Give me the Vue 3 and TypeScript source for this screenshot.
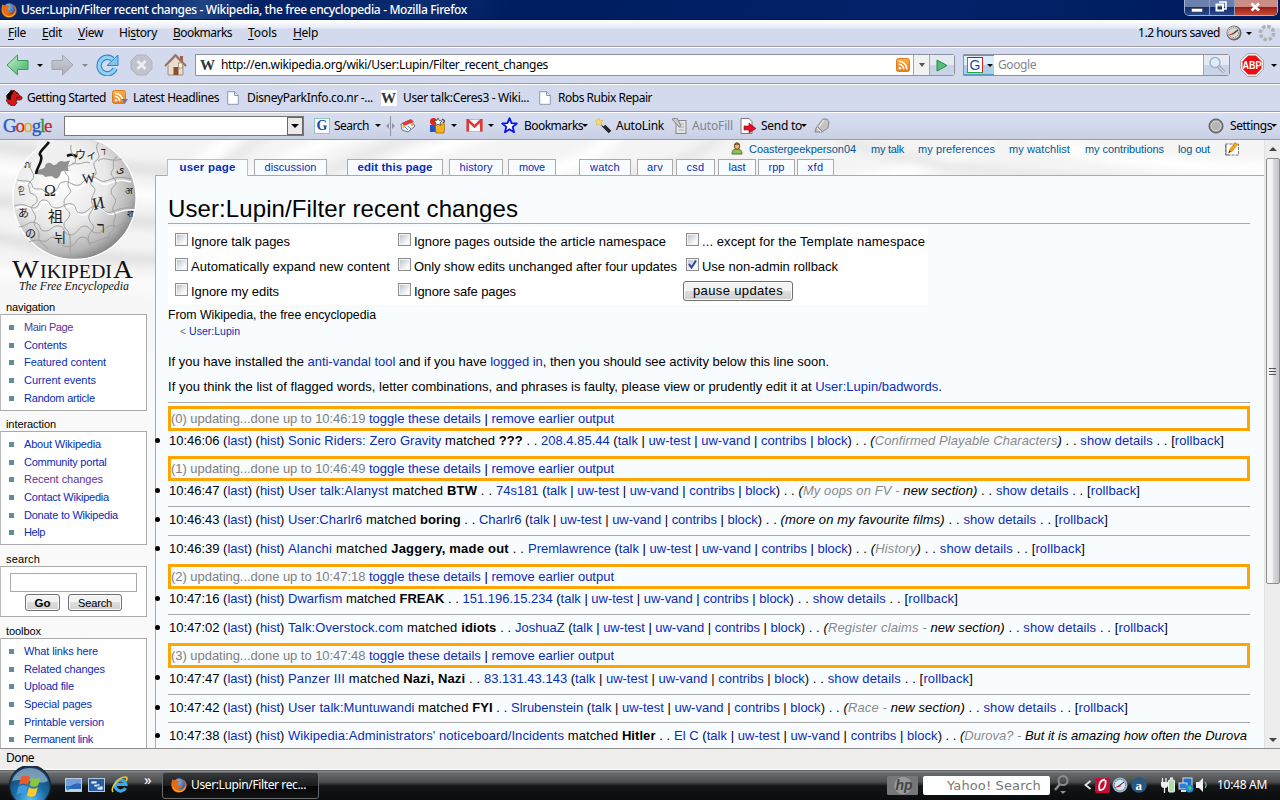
<script setup lang="ts">
import type { Directive } from 'vue'

// Spreads or tightens the letters of a label so that it fills the given width.
const vFit: Directive<HTMLElement, number> = {
  mounted(el, binding) {
    const count = (el.textContent ?? '').length
    if (!count) return
    const natural = el.getBoundingClientRect().width
    el.style.letterSpacing = `${(binding.value - natural) / count}px`
  },
}

interface Label { text: string; w: number; visited?: boolean; bold?: boolean; active?: boolean }

const menus = [
  { key: 'F', rest: 'ile', pre: '', w: 18 },
  { key: 'E', rest: 'dit', pre: '', w: 20 },
  { key: 'V', rest: 'iew', pre: '', w: 25 },
  { key: 's', rest: 'tory', pre: 'Hi', w: 38 },
  { key: 'B', rest: 'ookmarks', pre: '', w: 59 },
  { key: 'T', rest: 'ools', pre: '', w: 29 },
  { key: 'H', rest: 'elp', pre: '', w: 25 },
]

const personal: Label[] = [
  { text: 'Coastergeekperson04', w: 107 },
  { text: 'my talk', w: 33 },
  { text: 'my preferences', w: 77 },
  { text: 'my watchlist', w: 61 },
  { text: 'my contributions', w: 79 },
  { text: 'log out', w: 32 },
]

const tabs: Label[] = [
  { text: 'user page', w: 56, bold: true, active: true },
  { text: 'discussion', w: 52 },
  { text: 'edit this page', w: 75, bold: true },
  { text: 'history', w: 33 },
  { text: 'move', w: 26 },
  { text: 'watch', w: 30 },
  { text: 'arv', w: 16 },
  { text: 'csd', w: 18 },
  { text: 'last', w: 17 },
  { text: 'rpp', w: 16 },
  { text: 'xfd', w: 16 },
]

const navigation: Label[] = [
  { text: 'Main Page', w: 49, visited: true },
  { text: 'Contents', w: 43 },
  { text: 'Featured content', w: 82 },
  { text: 'Current events', w: 72 },
  { text: 'Random article', w: 71 },
]
const interaction: Label[] = [
  { text: 'About Wikipedia', w: 77 },
  { text: 'Community portal', w: 82.5 },
  { text: 'Recent changes', w: 79, visited: true },
  { text: 'Contact Wikipedia', w: 85 },
  { text: 'Donate to Wikipedia', w: 94 },
  { text: 'Help', w: 21 },
]
const toolbox: Label[] = [
  { text: 'What links here', w: 74 },
  { text: 'Related changes', w: 81 },
  { text: 'Upload file', w: 50 },
  { text: 'Special pages', w: 68 },
  { text: 'Printable version', w: 80 },
  { text: 'Permanent link', w: 69 },
]

const options = [
  { text: 'Ignore talk pages', w: 99, on: false },
  { text: 'Ignore pages outside the article namespace', w: 252, on: false },
  { text: '... except for the Template namespace', w: 223, on: false },
  { text: 'Automatically expand new content', w: 199, on: false },
  { text: 'Only show edits unchanged after four updates', w: 263, on: false },
  { text: 'Use non-admin rollback', w: 136, on: true },
  { text: 'Ignore my edits', w: 88, on: false },
  { text: 'Ignore safe pages', w: 102, on: false },
]

interface Edit {
  kind: 'edit'; time: string; title: string; match: string; user: string
  grey?: string; note?: string; open?: boolean; x: [number, number, number]; tight?: boolean; loose?: boolean
}
interface Box { kind: 'box'; n: number; until: string }
interface Rule { kind: 'rule' }

// x holds the right edges of the title, user and comment segments.
const feed: (Edit | Box | Rule)[] = [
  { kind: 'rule' },
  { kind: 'box', n: 0, until: '10:46:19' },
  { kind: 'edit', time: '10:46:06', title: 'Sonic Riders: Zero Gravity', match: '???', user: '208.4.85.44', grey: 'Confirmed Playable Characters', x: [541, 852, 1224] },
  { kind: 'box', n: 1, until: '10:46:49' },
  { kind: 'edit', time: '10:46:47', title: 'User talk:Alanyst', match: 'BTW', user: '74s181', grey: 'My oops on FV - ', note: 'new section', x: [496, 780, 1140] },
  { kind: 'rule' },
  { kind: 'edit', time: '10:46:43', title: 'User:Charlr6', match: 'boring', user: 'Charlr6', note: 'more on my favourite films', x: [479, 762, 1108] },
  { kind: 'rule' },
  { kind: 'edit', time: '10:46:39', title: 'Alanchi', match: 'Jaggery, made out', user: 'Premlawrence', grey: 'History', x: [528, 852, 1085] },
  { kind: 'box', n: 2, until: '10:47:18' },
  { kind: 'edit', time: '10:47:16', title: 'Dwarfism', match: 'FREAK', user: '151.196.15.234', x: [462.5, 794, 958] },
  { kind: 'rule' },
  { kind: 'edit', time: '10:47:02', title: 'Talk:Overstock.com', match: 'idiots', user: 'JoshuaZ', grey: 'Register claims - ', note: 'new section', x: [515, 805, 1168] },
  { kind: 'box', n: 3, until: '10:47:48' },
  { kind: 'edit', time: '10:47:47', title: 'Panzer III', match: 'Nazi, Nazi', user: '83.131.43.143', x: [484, 809, 973], loose: true },
  { kind: 'rule' },
  { kind: 'edit', time: '10:47:42', title: 'User talk:Muntuwandi', match: 'FYI', user: 'Slrubenstein', grey: 'Race - ', note: 'new section', x: [511, 825, 1128], tight: true },
  { kind: 'rule' },
  { kind: 'edit', time: '10:47:38', title: "Wikipedia:Administrators' noticeboard/Incidents", match: 'Hitler', user: 'El C', grey: 'Durova? - ', note: 'But it is amazing how often the Durova', open: true, x: [674, 942, 1247] },
]
</script>

<template>
  <div class="screen">
    <svg class="defs" width="0" height="0">
      <defs>
        <linearGradient id="green" x1="0" y1="0" x2="1" y2="1"><stop offset="0" stop-color="#c9f3cf" /><stop offset="1" stop-color="#3fae5e" /></linearGradient>
        <linearGradient id="grey" x1="0" y1="0" x2="0" y2="1"><stop offset="0" stop-color="#cfd2da" /><stop offset="1" stop-color="#a9acb5" /></linearGradient>
        <linearGradient id="rss" x1="0" y1="0" x2="0" y2="1"><stop offset="0" stop-color="#fbb04c" /><stop offset="1" stop-color="#ee7d16" /></linearGradient>
        <radialGradient id="globe" cx=".38" cy=".35" r=".7"><stop offset="0" stop-color="#fff" /><stop offset=".55" stop-color="#e8e8e8" /><stop offset=".85" stop-color="#b5b5b5" /><stop offset="1" stop-color="#7c7c7c" /></radialGradient>
        <radialGradient id="orb" cx=".5" cy=".85" r=".9"><stop offset="0" stop-color="#57c6f2" /><stop offset=".45" stop-color="#1c6ca5" /><stop offset="1" stop-color="#0d3057" /></radialGradient>
        <radialGradient id="ball" cx=".35" cy=".3" r=".8"><stop offset="0" stop-color="#8fc6f5" /><stop offset="1" stop-color="#143e94" /></radialGradient>
        <filter id="soft"><feGaussianBlur stdDeviation="5" /></filter>
        <symbol id="fox" viewBox="0 0 16 16">
          <circle cx="8.3" cy="7.6" r="6.3" fill="url(#ball)" />
          <path d="M1.2 2.2 3.6 3.5C4.8 2.8 6.2 2.8 7 3.8L9 4.6 7.4 6 6.8 8c1 2 3.6 1.6 4.6.6-.4 3-3.4 3.4-5 2.6C8 13 12.400 12.600 13.600 9.200 14.400 6.400 13 3.600 12 2.400 15 4 16.400 7.400 15.200 10.700 13.800 14.200 10.600 15.900 7 15.500 3 15 .3 11.600.4 7.800.4 5.600.9 4.200 1.200 2.200Z" fill="#e66b10" />
          <path d="M1.600 4.600C1 9 3 13 7 14 11 14.800 14 12 14.700 8.500 15 13 11 15.400 7.500 15 3 14.500.5 10 1.600 4.600Z" fill="#fbc229" />
        </symbol>
        <symbol id="feed" viewBox="0 0 14 14">
          <rect x=".5" y=".5" width="13" height="13" rx="2" fill="url(#rss)" stroke="#dd7d20" />
          <circle cx="3.900" cy="10.200" r="1.300" fill="#fff" /><path d="M2.800 6.300c2.700 0 4.900 2.200 4.900 4.900M2.800 3.200c4.400 0 8 3.600 8 8" fill="none" stroke="#fff" stroke-width="1.600" />
        </symbol>
        <symbol id="page" viewBox="0 0 12 14"><path d="M.7.7h7l3.600 3.600v9H.7Z" fill="#fff" stroke="#8c98aa" /><path d="M7.500.7v3.800h3.800" fill="#e4e8ef" stroke="#8c98aa" /></symbol>
        <symbol id="dial" viewBox="0 0 16 16"><circle cx="8" cy="8" r="7.500" fill="#666" /><circle cx="7.500" cy="7.500" r="6.300" fill="#d8d8d0" /><circle cx="7.500" cy="7.500" r="5" fill="none" stroke="#666" stroke-dasharray="1 1.500" /><path d="m8 8 4-3" stroke="#333" stroke-width="1.200" /><path d="m1.500 10.800 6-3.300 1 1.500z" fill="#d11" /></symbol>
      </defs>
    </svg>

    <header class="titlebar">
      <svg class="fox" width="16" height="16"><use href="#fox" /></svg>
      <span v-fit="446" class="caption">User:Lupin/Filter recent changes - Wikipedia, the free encyclopedia - Mozilla Firefox</span>
      <div class="winbtns">
        <i class="wb"><svg width="24" height="15"><rect x="6.500" y="8.500" width="11" height="3.500" fill="#fff" stroke="#445" stroke-width=".6" /></svg></i>
        <i class="wb"><svg width="24" height="15"><path d="M9 2h7v7h-2" fill="none" stroke="#fff" stroke-width="1.600" /><rect x="6.500" y="4.500" width="6.500" height="6" fill="none" stroke="#fff" stroke-width="2" /></svg></i>
        <i class="wb close"><svg width="41" height="15"><path d="m16.500 3.500 7.500 7M24 3.500l-7.500 7" stroke="#fff" stroke-width="2.800" /></svg></i>
      </div>
    </header>

    <nav class="menubar seg">
      <div class="menus">
        <span v-for="m in menus" :key="m.rest" v-fit="m.w" class="t">{{ m.pre }}<u>{{ m.key }}</u>{{ m.rest }}</span>
      </div>
      <div class="saved">
        <span v-fit="82" class="t">1.2 hours saved</span>
        <svg width="16" height="16"><use href="#dial" /></svg>
        <i class="tri" />
        <svg width="18" height="18" class="throb"><circle cx="9" cy="9" r="6.600" fill="none" stroke="#b0b2b8" stroke-width="3.500" stroke-dasharray="3.500 1.680" /></svg>
      </div>
    </nav>

    <div class="navbar seg">
      <div class="navicons">
        <svg width="23" height="22"><path d="M1 11 11.500 1v5.500H22v9H11.500V21Z" fill="url(#green)" stroke="#3c9960" stroke-linejoin="round" /></svg>
        <i class="tri" />
        <svg width="23" height="22"><path d="M22 11 11.500 1v5.500H1v9h10.500V21Z" fill="url(#grey)" stroke="#a2a5ae" stroke-linejoin="round" /></svg>
        <i class="tri dim" />
        <svg width="23" height="22"><path d="M16.500 5.200A8.200 8.200 0 1 0 19 14.500" fill="none" stroke="#3187c8" stroke-width="5.500" /><path d="M16.500 5.200A8.200 8.200 0 1 0 19 14.500" fill="none" stroke="#8fd0f3" stroke-width="3.300" /><path d="M22 1v10.500h-11z" fill="#7fc4ee" stroke="#3187c8" /></svg>
        <svg width="23" height="22"><path d="M7 1h9l6 6v8l-6 6H7l-6-6V7Z" fill="#c0c3cb" stroke="#afb2ba" /><path d="m7.500 7 8 8m0-8-8 8" stroke="#eceef4" stroke-width="2.800" /></svg>
        <svg width="23" height="22"><rect x="16" y="2" width="3" height="6" fill="#a55e4c" /><path d="M4 10v11h15V10l-7.500-8Z" fill="#eadcce" stroke="#a58f7d" /><path d="m1 12 10.500-11 10.500 11" fill="none" stroke="#927466" stroke-width="2" /><path d="m3 12 8.500-8.500L20 12" fill="none" stroke="#d8c3b3" /><rect x="9.500" y="13" width="5" height="8" fill="#8a4e33" /><rect x="14.500" y="9" width="4" height="5" fill="#f6f0df" stroke="#9a7d65" stroke-width=".7" /></svg>
      </div>
      <div class="url">
        <b class="wmark" v-fit="15">W</b>
        <span v-fit="327" class="t">http://en.wikipedia.org/wiki/User:Lupin/Filter_recent_changes</span>
        <svg width="14" height="14" class="urlfeed"><use href="#feed" /></svg>
        <i class="urldrop"><i class="tri slate" /></i>
        <i class="go"><svg width="12" height="13"><path d="M1 1v11l10-5.500Z" fill="#58bd78" stroke="#1e8a45" /></svg></i>
      </div>
      <div class="finder">
        <i class="engine"><b class="g">G</b><i class="tri" /></i>
        <span v-fit="38" class="t hint">Google</span>
        <i class="glass"><svg width="18" height="18"><path d="m10 10 6 6" stroke="#8a8f9c" stroke-width="3" /><path d="m10 10 6 6" stroke="#e2e6ef" stroke-width="1.200" /><circle cx="7" cy="6.500" r="5" fill="#ddeefa" stroke="#9eb3c8" stroke-width="1.500" /></svg></i>
      </div>
      <svg class="abp" width="24" height="24"><path d="M7.500.7h9l6.800 6.800v9l-6.800 6.800h-9L.7 16.500v-9Z" fill="#fff" stroke="#999" /><path d="M8.200 2.500h7.600l5.700 5.700v7.600l-5.700 5.700H8.200l-5.700-5.700V8.200Z" fill="#ec0d13" /><text x="2.500" y="16" textLength="19" lengthAdjust="spacingAndGlyphs" class="abptext">ABP</text></svg>
      <i class="tri abptri" />
    </div>

    <div class="bookbar seg">
      <svg width="17" height="17"><path d="M1 6 4 3l1-2 2 1 1-1 2 2 2 1 1 2 3 2v2l-2 1h-3l-1 1 1 2-2 2-1 2-1-2-2 1-1-2-2 0 0-2-2-1 1-2z" fill="#d81616" stroke="#4a0808" stroke-width=".7" /><path d="m1 6 3-3 4-1-3 4-1 5-3-2zM10 4l1 1M14 8l-4 1" stroke="#1d0505" stroke-width="1" /></svg>
      <span v-fit="79" class="t">Getting Started</span>
      <svg width="17" height="17"><g><use href="#feed" width="14" height="14" x="0" y="1" /><path d="M9 10h7l-3.500 5Z" fill="#787880" /></g></svg>
      <span v-fit="86" class="t">Latest Headlines</span>
      <svg width="12" height="14"><use href="#page" /></svg>
      <span v-fit="126" class="t">DisneyParkInfo.co.nr -...</span>
      <b class="wmark whitebg" v-fit="15">W</b>
      <span v-fit="126" class="t">User talk:Ceres3 - Wiki...</span>
      <svg width="12" height="14"><use href="#page" /></svg>
      <span v-fit="94" class="t">Robs Rubix Repair</span>
    </div>

    <div class="gbar seg">
      <div class="gitems">
        <span v-fit="48" class="glogo"><i class="bl">G</i><i class="rd">o</i><i class="ye">o</i><i class="bl">g</i><i class="gr">l</i><i class="rd">e</i></span>
        <div class="gbox"><i class="gdrop"><i class="tri" /></i></div>
        <b class="gicon">G</b>
        <span v-fit="35" class="t">Search</span>
        <i class="tri" />
        <svg width="9" height="20"><path d="M4.500 0v20" stroke="#8b8fa0" /><path d="M3 7v6L0 10zM6 7v6l3-3z" fill="#9296a8" /></svg>
        <svg width="16" height="16"><path d="m1 6 9-4 5 6-7 6-6-2z" fill="#eee" stroke="#777" /><path d="m2 5 9-4 3 3-10 4z" fill="#d93c3c" /><path d="m5 9 3 3M8 8l3 3" stroke="#588cd0" /><path d="m3 9 2-1M11 7l2-1" stroke="#e6a82e" stroke-width="2" /></svg>
        <svg width="16" height="17"><circle cx="4.500" cy="4.500" r="3.500" fill="#e02420" /><rect x="1" y="8" width="7" height="7" fill="#1d55cf" /><path d="M6 7h10l-1 9H7Z" fill="#f5b41c" stroke="#9a6205" stroke-width=".7" /><path d="m9 1 1.200 2.500 2.800.5-2 2 .5 2.500L9 7.300 6.500 8.500 7 6 5 4l2.800-.5z" fill="#fff" stroke="#333" stroke-width=".7" /><path d="m13 2 3 2-2 2" fill="none" stroke="#555" stroke-width="1.500" /></svg>
        <i class="tri" />
        <svg width="17" height="13"><rect x=".5" y=".5" width="16" height="12" fill="#fff" stroke="#bbb" /><path d="M1.800 12.500V1l6.700 6.500L15.200 1v11.500" fill="none" stroke="#e0383c" stroke-width="2.600" /></svg>
        <i class="tri" />
        <svg width="17" height="17"><path d="m8.500 1.200 2 5 5.300.3-4.100 3.400 1.400 5.300-4.600-3-4.600 3 1.400-5.300L1.200 6.500l5.300-.3Z" fill="#fff" stroke="#0713ef" stroke-width="1.800" stroke-linejoin="round" /></svg>
        <span v-fit="59" class="t">Bookmarks</span>
        <i class="tri sm" />
        <svg width="17" height="16"><path d="m6 5 9 9" stroke="#222" stroke-width="3.500" /><path d="m6.500 4.500 3 3" stroke="#ddd" stroke-width="3" /><path d="m4 0 1 3 3-1-2 3 1 3-3-2-3 1 1-3-2-2 3 0z" fill="#f8df61" stroke="#cfa92f" stroke-width=".4" /></svg>
        <span v-fit="48" class="t">AutoLink</span>
        <svg width="17" height="16"><rect x="5" y="2.500" width="10" height="13" fill="#e4e4e4" stroke="#888" /><path d="M8 6h5M8 9h5M8 12h5" stroke="#aaa" /><path d="m1 1 5-1 4 8-2 1z" fill="#c9c9c9" stroke="#888" /></svg>
        <span v-fit="41" class="t hint">AutoFill</span>
        <svg width="17" height="16"><path d="M1 .5h8l3 3v12H1Z" fill="#fff" stroke="#777" /><path d="M4 8h5V5l7 5.500L9 15v-3H4Z" fill="#e50c24" stroke="#8e0718" stroke-width=".6" /></svg>
        <span v-fit="41" class="t">Send to</span>
        <i class="tri sm" />
        <svg width="16" height="16"><path d="m1 14 1-4 7-9h4l2 3-1 6-6 4z" fill="#c3c3c3" stroke="#777" stroke-width=".8" /><path d="m3 10 4 4M10 2 5 9" stroke="#fff" /><path d="m4 9 4 4" stroke="#888" /></svg>
      </div>
      <div class="settings">
        <svg width="16" height="16"><circle cx="8" cy="8" r="7" fill="#888" stroke="#555" /><circle cx="8" cy="8" r="5" fill="#b5b5b5" stroke="#ddd" /></svg>
        <span v-fit="42" class="t">Settings</span><i class="tri sm" />
      </div>
    </div>

    <main class="view">
      <div class="web">
        <svg class="backdrop" width="1264" height="210">
          <rect width="1264" height="210" fill="#f4f4f4" />
          <g filter="url(#soft)" fill="none">
            <path d="M-20 5C60 8 120 35 190 30M-20 60C60 62 110 90 180 80M-20 95C50 105 100 125 180 118" stroke="#e0e0e0" stroke-width="11" />
            <path d="M-20 28C60 30 110 60 180 55M-20 130C60 138 120 148 190 145" stroke="#fff" stroke-width="10" />
            <path d="M160 60 240-10M245 45C300 10 340-5 390-15M340 50C390 25 440 5 500-10M460 50C560 35 590 20 620-8M700 40C800 55 900 45 990 0M1030 0C1110 20 1190 28 1270 28" stroke="#fff" stroke-width="14" />
            <path d="M185 55 270-10M305 45C345 20 385 8 430-10M550 50C620 35 690 30 720-5M840 0C940 35 1080 40 1270 50" stroke="#e6e6e6" stroke-width="9" />
          </g>
          <rect y="140" width="156" height="70" fill="#f9f9f9" opacity=".65" />
        </svg>

        <aside class="side">
          <svg class="logo" width="155" height="158" viewBox="0 140 155 158">
            <circle cx="74.500" cy="198" r="61.500" fill="url(#globe)" stroke="#fff" stroke-width="1.300" />
            <path d="M37 142 51 140 76 144 66 149 70 162 59 170 48 164 36 174Z" fill="#f0f0f0" />
            <path d="M36 173c4-6 7-3 9-6 0-4 5-6 8-2 4 1 5-5 9-4 3 2 6-1 8 0-3 5-2 8-1 10-4 0-6-1-8 1-1 4-3 8-7 6-2-3-6-1-9-1-2-4-6-1-9-4Z" fill="#919191" />
            <path d="M36 174c1-8 7-12 5-18-4-3 3-7 8-14M67 156c4-2 8-1 10 1" fill="none" stroke="#111" stroke-width="2.600" />
            <g fill="none" stroke="#fff" stroke-width="1.500" transform="translate(1 1)"><path d="M17 182c9 2 13-1 15 5 1 7 8 2 11 5s6 5 12 1 2-8 8-9c7-2 10 5 16 3s5-8 12-8c7-1 8 6 15 4s11-6 24-2" /><path d="M15 207c12-4 14 2 20 2s3-9 11-8c6 1 4 8 11 8 8 0 9-6 16-4 6 2 2 9 9 9 8 0 8-8 16-7 8 2 7 8 14 6s10-5 22-4" /></g>
            <g fill="none" stroke="#a0a0a0" stroke-width="1">
              <path d="M17 180c9 2 13-1 15 5 1 7 8 2 11 5s6 5 12 1 2-8 8-9c7-2 10 5 16 3s5-8 12-8c7-1 8 6 15 4s11-6 25-2" />
              <path d="M14 206c12-4 14 2 20 2s3-9 11-8c6 1 4 8 11 8 8 0 9-6 16-4 6 2 2 9 9 9 8 0 8-8 16-7 8 2 7 8 14 6s10-5 23-4" />
              <path d="M19 227c9-1 10-7 17-4 6 2 2 8 9 8s7-6 14-5c7 0 3 8 11 9 8 0 8-9 15-9 6 1 5 7 12 7s9-9 16-7 9-4 17-5" />
              <path d="M29 242c9-5 15 2 19-2 3-5 12-3 13 3 3 6 13 4 15-1 3-7 12-6 13 0 2 4 12-5 22-5" />
              <path d="M71 145c-2 10 7 12 4 18-6 3-13 5-9 11 6 4 0 9 3 14 6 5-6 8-5 15 0 8 8 7 5 14-3 5-8 6-3 12 6 5 4 17 4 28" />
              <path d="M98 143c-5 7 5 12-1 17-7 4 0 8-1 14-4 5-8 7-4 12 8 4-3 10 0 17 5 6-5 10-3 16s7 6 3 12c-5 5-5 11-1 15" />
              <path d="M31 162c-4 8 7 12 1 18-6 4-2 8-2 13 9 2 9 10 3 12-5 5 5 8 2 15-4 6 5 8 4 16-2 7 6 8 9 13" />
              <path d="M117 157c-7 3-1 10-5 14s5 7 4 13c-5 4-7 9-2 13 5 5-3 9-1 14 6 5-1 9 1 14 2 6-7 7-6 14" />
              <path d="M72 163c9 3 13-3 18 0M98 161c7-6 12 2 24-2" />
            </g>
            <g fill="#1c1c1c" class="glyphs">
              <text x="44" y="196" font-size="16">Ω</text><text x="82" y="183" font-size="14" transform="rotate(-8 88 178)">W</text>
              <text x="92" y="209" font-size="17" transform="rotate(-12 98 203)">И</text><text x="48" y="222" font-size="15">祖</text>
              <text x="19" y="192" font-size="11" transform="rotate(80 22 188)">வ</text><text x="75" y="159" font-size="11">ウィ</text>
              <text x="101" y="155" font-size="10">ד</text><text x="116" y="173" font-size="11">ى</text>
              <text x="97" y="233" font-size="16">ר</text><text x="125" y="194" font-size="10">अ</text><text x="127" y="217" font-size="9">श</text>
              <text x="18" y="217" font-size="11">あ</text><text x="25" y="238" font-size="11">の</text><text x="54" y="242" font-size="13">뉘</text><text x="24" y="168" font-size="9">ภ</text>
            </g>
            <g class="brand">
              <text x="12" y="278" font-size="25" textLength="27" lengthAdjust="spacingAndGlyphs">W</text>
              <text x="40" y="278" font-size="19" textLength="72" lengthAdjust="spacingAndGlyphs">IKIPEDI</text>
              <text x="113" y="278" font-size="25" textLength="20" lengthAdjust="spacingAndGlyphs">A</text>
            </g>
            <text x="19" y="290" class="motto" textLength="110" lengthAdjust="spacingAndGlyphs">The Free Encyclopedia</text>
          </svg>

          <h5 class="n"><span v-fit="49" class="t">navigation</span></h5>
          <ul class="portlet p1"><li v-for="l in navigation" :key="l.text"><a v-fit="l.w" :class="{ visited: l.visited }">{{ l.text }}</a></li></ul>
          <h5><span v-fit="50" class="t">interaction</span></h5>
          <ul class="portlet p2"><li v-for="l in interaction" :key="l.text"><a v-fit="l.w" :class="{ visited: l.visited }">{{ l.text }}</a></li></ul>
          <h5 class="low"><span v-fit="34" class="t">search</span></h5>
          <div class="portlet sbox">
            <div class="sinput" />
            <div class="sbtns"><span class="btn go1"><b v-fit="16">Go</b></span><span class="btn go2"><span v-fit="34">Search</span></span></div>
          </div>
          <h5 class="low"><span v-fit="35" class="t">toolbox</span></h5>
          <ul class="portlet p3"><li v-for="l in toolbox" :key="l.text"><a v-fit="l.w">{{ l.text }}</a></li></ul>
        </aside>

        <section class="column">
          <div class="personal">
            <svg width="12" height="13"><path d="M1 12c0-4 2-5 5-5s5 1 5 5Z" fill="#8fbf4e" stroke="#5c6b33" /><ellipse cx="6" cy="4" rx="2.700" ry="3.300" fill="#edb36e" stroke="#7c4f22" /><path d="M3.300 3.500C3.500.5 8.500.5 8.700 3.500 7 2.300 5 2.300 3.300 3.500Z" fill="#6f3c12" /></svg>
            <a v-for="l in personal" :key="l.text" v-fit="l.w">{{ l.text }}</a>
            <svg width="15" height="14" class="pen"><rect x=".5" y="2" width="13" height="11" fill="#fff" stroke="#777" stroke-dasharray="3 1" /><path d="M1 2v11h3" fill="none" stroke="#777" /><path d="M3.500 11 5 7l5-6.500 2.500 2L7.500 9Z" fill="#f2a51c" stroke="#c4780f" stroke-width=".6" /><path d="m3.500 11 1-2.500 1.500 1z" fill="#333" /></svg>
          </div>
          <div class="tabs">
            <div v-for="l in tabs" :key="l.text" class="tab" :class="{ active: l.active, strong: l.bold }"><a v-fit="l.w">{{ l.text }}</a></div>
          </div>
          <article class="content">
            <h1><span v-fit="350" class="t">User:Lupin/Filter recent changes</span></h1>
            <div class="options">
              <label v-for="o in options" :key="o.text"><i class="check"><svg v-if="o.on" width="9" height="9"><path d="m1 4 2.500 3.500L8 .5" fill="none" stroke="#31479b" stroke-width="2" /></svg></i><span v-fit="o.w" class="t">{{ o.text }}</span></label>
              <span class="btn pause"><span v-fit="90">pause updates</span></span>
            </div>
            <p class="from"><span v-fit="208" class="t">From Wikipedia, the free encyclopedia</span></p>
            <p class="sub"><span v-fit="60" class="t">&lt; <a>User:Lupin</a></span></p>
            <p class="para"><span v-fit="661" class="t">If you have installed the <a>anti-vandal tool</a> and if you have <a>logged in</a>, then you should see activity below this line soon.</span></p>
            <p class="para second"><span v-fit="774" class="t">If you think the list of flagged words, letter combinations, and phrases is faulty, please view or prudently edit it at <a>User:Lupin/badwords</a>.</span></p>
            <template v-for="(f, i) in feed" :key="i">
              <div v-if="f.kind === 'rule'" class="rule" />
              <div v-else-if="f.kind === 'box'" class="update"><span v-fit="198" class="t">({{ f.n }}) updating...done up to {{ f.until + ' ' }}</span><span v-fit="245" class="t blk"><a>toggle these details</a> | <a>remove earlier output</a></span></div>
              <div v-else class="edit" :class="{ tight: f.tight, loose: f.loose }">
                <span v-fit="119" class="t">{{ f.time }} (<a>last</a>) (<a>hist</a>){{ ' ' }}</span>
                <span v-fit="f.x[0] - 288" class="t"><a>{{ f.title }}</a> matched <b>{{ f.match }}</b>{{ ' . . ' }}</span>
                <span v-fit="f.x[1] - f.x[0]" class="t"><a>{{ f.user }}</a> (<a>talk</a> | <a>uw-test</a> | <a>uw-vand</a> | <a>contribs</a> | <a>block</a>)</span>
                <span v-fit="f.x[2] - f.x[1]" class="t">{{ ' . . ' }}<template v-if="f.grey || f.note"><em>(<i class="muted">{{ f.grey }}</i>{{ f.note }}<template v-if="!f.open">)</template></em>{{ f.open ? '' : ' . . ' }}</template><template v-if="!f.open"><a>show details</a>{{ ' . . ' }}[<a>rollback</a>]</template></span>
              </div>
            </template>
          </article>
        </section>
      </div>
      <div class="scroll">
        <i class="arrow up" />
        <div class="thumb"><i /><i /><i /></div>
        <i class="arrow down" />
      </div>
    </main>

    <div class="status"><span v-fit="28" class="t">Done</span></div>

    <footer class="taskbar">
      <svg class="start" width="48" height="34" viewBox="0 0 48 34">
        <circle cx="24" cy="20" r="20.500" fill="url(#orb)" stroke="#1a2630" stroke-width="1.500" />
        <path d="M6 15C9 6 16 2 24 2s15 4 18 13C33 20 18 11 6 15Z" fill="#c5dbe6" opacity=".55" />
        <path d="M15 11c3-2 6-2 9 0l-2 8c-3-2-6-2-9 0Z" fill="#ed5a2a" /><path d="M25.500 11.500c3 2 6 2 9-.2l-2.200 8c-3 2-5.500 2-8.700 0Z" fill="#8cc63c" /><path d="M12.500 20.500c3-2 6-2 9 0l-2.200 8c-3-2-5.800-2-8.800 0Z" fill="#3d9be4" /><path d="M23 21.300c3 2 5.700 2 8.800 0l-2.200 8c-3 2-6 2-8.800 0Z" fill="#fbcb2e" />
      </svg>
      <div class="quick">
        <svg width="17" height="14"><rect x=".5" y=".5" width="16" height="13" fill="#2d67ba" stroke="#bccbdc" /><path d="M1 1h15v5C10 3 6 10 1 8Z" fill="#8cb7e8" opacity=".7" /><rect x="1" y="11" width="15" height="2" fill="#c5d1de" /><circle cx="3" cy="10.500" r="1.800" fill="#248cd0" /></svg>
        <svg width="17" height="14"><rect x=".5" y=".5" width="16" height="13" fill="#245da8" stroke="#b4c8df" /><path d="M3 3h6v3H3zM6 6h6v3H6zM9 8h6v4H9z" fill="#e8f1fb" stroke="#305f9d" stroke-width=".8" /></svg>
        <svg width="18" height="18"><path d="M14.500 12a5.500 5.500 0 1 1 .5-3.500H5" fill="none" stroke="#39aae8" stroke-width="3.200" /><path d="M2 16C-1 12 8 1 14 1c3 0 2 3 1 4" fill="none" stroke="#f4c52c" stroke-width="1.600" /></svg>
        <span class="more">»</span>
      </div>
      <div class="task"><svg width="16" height="16"><use href="#fox" /></svg><span v-fit="115" class="t">User:Lupin/Filter rec...</span></div>
      <div class="tray">
        <svg width="31" height="19"><rect width="31" height="19" rx="1.500" fill="#777" /><circle cx="16" cy="9.500" r="8.700" fill="#999" /><text x="8.500" y="14" class="hp">hp</text></svg>
        <div class="yahoo"><span v-fit="94" class="t">Yahoo! Search</span></div>
        <svg width="16" height="22"><circle cx="9" cy="6.500" r="4.500" fill="none" stroke="#8c8c8c" stroke-width="2" /><path d="m6 10-5 6" stroke="#8c8c8c" stroke-width="2.500" /><path d="M6 17h6l-3 3Z" fill="#8c8c8c" /></svg>
        <svg width="8" height="10"><path d="M6.500 1 1.500 5l5 4" fill="none" stroke="#e6e6e6" stroke-width="1.800" /></svg>
        <svg width="15" height="15"><rect width="15" height="15" rx="2" fill="#c40b31" /><path d="M10 1.500C5 2 3 7 4.500 12c4 1 7-4 6-10" fill="none" stroke="#fff" stroke-width="1.800" /></svg>
        <svg width="17" height="16"><circle cx="8" cy="8" r="7.500" fill="#9bb4cc" /><circle cx="8" cy="8" r="5.500" fill="#d7e7f5" stroke="#476890" stroke-dasharray="1 1" /><path d="m2 11 6-3.500 1 2z" fill="#d22" /><path d="m8 8 4-3" stroke="#223" /></svg>
        <svg width="16" height="16"><circle cx="8" cy="8" r="7.800" fill="#285780" /><text x="4.500" y="12.500" class="aa">a</text></svg>
        <svg width="15" height="17"><rect x="8.500" y="3" width="6" height="12" rx="1" fill="#a9e1a4" stroke="#eee" /><path d="M10 1.500h3" stroke="#eee" stroke-width="2" /><path d="M1 5h7v3c0 2-1 3-3.500 3S1 10 1 8z" fill="#eee" /><path d="M2.500 1v4M6 1v4M4.500 11v5" stroke="#eee" stroke-width="1.300" /></svg>
        <svg width="16" height="16"><rect x="5" y="1" width="9" height="8" fill="#1c6ed4" stroke="#ddd" /><rect x="1" y="6" width="8" height="6" fill="#2c7cdd" stroke="#ddd" /><path d="M3 14h5" stroke="#ddd" stroke-width="2" /><circle cx="11.500" cy="11.500" r="4" fill="#1d88d8" /><path d="m9 10 3-1 2 2-2 3-1-2z" fill="#5ac844" /></svg>
        <svg width="13" height="14"><path d="M0 4h3l4-4v14l-4-4H0Z" fill="#eee" /><path d="M9 4c1.500 2 1.500 4 0 6" fill="none" stroke="#7cc889" stroke-width="1.200" /></svg>
        <span v-fit="50" class="t clock">10:48 AM</span>
      </div>
    </footer>
  </div>
</template>

<style>
html, body { margin: 0; overflow: hidden; }
</style>
<style scoped>
.screen { width: 1280px; height: 800px; overflow: hidden; display: flex; flex-direction: column; font: 12px/16px "Noto Sans", "Open Sans", sans-serif; color: #000; background: #d3daed; }
.defs { position: absolute; }
svg { display: block; flex: none; }
i { font-style: normal; }
.t, .caption, .btn span, .btn b, a { white-space: pre; }
.t, .caption { display: inline-block; flex: none; justify-self: start; }
.tri { display: block; width: 0; height: 0; border: 3px solid transparent; border-top: 3px solid #000; border-bottom: 0; align-self: center; }
.tri.dim { border-top-color: #888; }
.tri.slate { border-width: 4px 3.500px 0; border-top-color: #555; }

.titlebar { height: 20px; box-sizing: border-box; flex: none; display: flex; align-items: center; background: linear-gradient(115deg, #0a2468 0, #0a2a6c 12%, #204384 16%, #042064 20%, #0a2c70 33%, #001c60 40%, #04226a 72%, #001a5c 100%); border-bottom: 1px solid #0b1739; color: #fff; }
.fox { margin-left: 1px; }
.caption { margin-left: 4px; font-weight: 500; }
.winbtns { display: flex; align-self: flex-start; margin: 0 2px 0 auto; height: 15px; border: 1px solid #a6b4cf; border-top: 0; border-radius: 0 0 5px 5px; overflow: hidden; }
.wb { width: 25px; box-sizing: border-box; border-right: 1px solid #8c9dc0; background: linear-gradient(#6b80ac 0 45%, #132f6f 50%, #29498a); }
.close { width: 42px; border: 0; background: linear-gradient(#cb8d86 0 45%, #9c1f17 50%, #c84a34); }
.seg { flex: none; box-sizing: border-box; border-bottom: 1px solid #9a9ba3; box-shadow: inset 0 1px #fff; display: flex; align-items: center; background: #d3daed; }
.menubar { height: 27px; background: linear-gradient(#fff, #e6eaf5 8px, #d3daed 9px); }
.menus { display: grid; grid-template-columns: 34px 36px 41px 54px 75px 45px 30px; padding-left: 8px; }
.menus u { text-underline-offset: 2px; }
.saved { margin-left: auto; display: flex; align-items: center; width: 142px; }
.saved svg { margin-left: 6px; }
.saved .tri { margin-left: 4px; }

.navbar { height: 37px; }
.navicons { width: 195px; display: grid; grid-template-columns: 31px 14px 31px 14px 34px 34px 31px; padding-left: 6px; box-sizing: border-box; align-items: center; flex: none; }
.url { width: 760px; height: 22px; box-sizing: border-box; border: 1px solid #8d919e; background: #fff; border-radius: 0 3px 3px 0; display: flex; align-items: center; flex: none; }
.wmark { font: bold 15px/16px "Liberation Serif", serif; display: inline-block; width: 16px; margin-left: 4px; color: #333; }
.url .t { margin-left: 5px; }
.urlfeed { margin-left: auto; margin-right: 3px; }
.urldrop { width: 17px; height: 20px; box-sizing: border-box; border: solid #a4a7b0; border-width: 0 1px; display: flex; justify-content: center; background: #f2f2f2; }
.go { width: 24px; height: 20px; background: linear-gradient(#e5e9f4 50%, #cbd3e8 50%); display: flex; align-items: center; justify-content: center; }
.finder { margin-left: 8px; width: 267px; height: 22px; box-sizing: border-box; border: 1px solid #8d919e; border-radius: 0 3px 3px 0; background: #fff; display: flex; align-items: center; }
.engine { width: 30px; height: 20px; background: linear-gradient(#dceefa 50%, #a9cfe9 50%); display: flex; align-items: center; border: solid #5a9bc5; border-width: 1px 0; box-sizing: border-box; }
.g { font: 14px/14px "Liberation Sans", sans-serif; width: 14px; height: 14px; margin: 0 4px 0 3px; background: #fff; color: #1c49b4; border: 1px solid; border-color: #1c49b4 #d22 #2a4 #2a4; text-align: center; }
.hint { color: #82858c; }
.finder .t { margin-left: 4px; }
.glass { margin-left: auto; width: 25px; height: 20px; background: linear-gradient(#e5e9f4 50%, #cbd3e8 50%); border-left: 1px solid #a4a7b0; display: flex; align-items: center; justify-content: center; }
.abp { margin-left: 10px; }
.abptext { font: bold 11px "Liberation Sans", sans-serif; fill: #fff; }
.abptri { margin-left: 7px; }

.bookbar { height: 28px; display: grid; grid-template-columns: 21px 85px 21px 94px 20px 134px 22px 136px 19px 100px; padding-left: 6px; }
.bookbar .wmark { margin: 0; background: #fff; }

.gbar { height: 28px; background: linear-gradient(#d8def0, #d3daed 50%, #c9d0e4); justify-content: space-between; }
.gitems { display: grid; align-items: center; padding-left: 3px; grid-template-columns: 61px 250px 20px 41px 11px 14px 29px 22px 15px 22px 13px 23px 59px 12px 21px 55px 21px 48px 21px 41px 12px 20px; }
.glogo { font: 19px/20px "Liberation Serif", serif; white-space: pre; justify-self: start; -webkit-text-stroke: .3px; }
.bl { color: #2556c4; } .rd { color: #d0262c; } .ye { color: #e9a91b; } .gr { color: #1f9b47; }
.gbox { width: 240px; height: 20px; box-sizing: border-box; background: #fff; border: 1px solid #777; display: flex; justify-content: flex-end; }
.gdrop { width: 14px; border: 1px solid #666; background: #eaeaea; display: flex; justify-content: center; }
.gdrop .tri { border-width: 4px 4px 0; }
.gicon { font: bold 14px/14px "Liberation Serif", serif; width: 14px; height: 14px; background: #fff; color: #2144a8; border: 1px solid #8cb; border-right-color: #e99; text-align: center; }
.sm { margin-left: -1px; }
.settings { display: flex; align-items: center; width: 72px; }
.settings .t { margin-left: 6px; }

.view { flex: none; height: 608px; display: flex; border-bottom: 1px solid #8d8d8d; }
.web { position: relative; width: 1264px; height: 608px; display: flex; overflow: hidden; background: #f9f9f9; font-family: "Liberation Sans", Arial, "Noto Sans CJK SC", sans-serif; }
.backdrop { position: absolute; left: 0; top: 0; }
a { color: #082cb8; }
.visited { color: #5a3696; }
.side { position: relative; width: 155px; flex: none; font-size: 11px; }
.logo { height: 158px; }
.glyphs { font-family: "Liberation Serif", "Noto Sans CJK JP", "Noto Sans", "DejaVu Sans", serif; }
.brand { font-family: "Liberation Serif", serif; fill: #111; }
.motto { font: italic 13px "Liberation Serif", serif; fill: #111; }
.side h5 { margin: 0; font: 11px/13px "Liberation Sans", sans-serif; height: 20px; padding: 7px 0 0 6px; box-sizing: border-box; }
.side h5.n { height: 16px; padding-top: 3px; }
.side h5.low { height: 21px; padding-top: 8px; }
.portlet { margin: 0; padding: 4px 0 0; list-style: none; width: 147px; box-sizing: border-box; border: 1px solid #aaa; border-left-color: #bbb; background: #fff; }
.p1 { height: 97px; } .p2 { height: 114px; } .p3 { height: 120px; }
.portlet li { height: 17.700px; line-height: 17.600px; padding-left: 23px; position: relative; }
.portlet li::before { content: ""; position: absolute; left: 8px; top: 6px; width: 5px; height: 5px; background: #638c9c; }
.sbox { height: 51px; padding: 6px 9px 0; }
.sinput { height: 19px; box-sizing: border-box; border: 1px solid #aaa; background: #fff; width: 127px; }
.sbtns { display: flex; gap: 8px; margin: 2px 0 0 15px; }
.btn { display: flex; justify-content: center; align-items: center; box-sizing: border-box; border: 1px solid #707070; border-radius: 3px; background: linear-gradient(#f3f3f3 50%, #dedede 50%, #cfcfcf); box-shadow: inset 0 0 0 1px #fafafa; }
.go1 { width: 35px; height: 17px; font-size: 11.500px; } .go2 { width: 54px; height: 17px; }

.column { position: relative; flex: 1; min-width: 0; }
.personal { height: 19px; display: grid; align-items: center; padding: 0 0 2px 576px; box-sizing: border-box; grid-template-columns: 18px 122px 47px 91px 76px 93px 47px 16px; font-size: 11px; }
.personal a { color: #005896; justify-self: start; }
.tabs { height: 16px; display: flex; padding-left: 12px; font-size: 11px; }
.tab { box-sizing: border-box; height: 16px; border: 1px solid #aaa; border-bottom: 0; background: #f8fcff; line-height: 15px; display: flex; justify-content: center; width: 73px; margin-right: 6px; }
.tab.active { width: 81px; border-color: #fabd23; height: 17px; position: relative; }
.strong { font-size: 11.500px; }
.strong a { font-weight: bold; }
.tab:nth-child(2) { margin-right: 20px; }
.tab:nth-child(3) { width: 96px; margin-right: 6px; }
.tab:nth-child(4) { width: 54px; margin-right: 5px; }
.tab:nth-child(5) { width: 48px; margin-right: 23px; }
.tab:nth-child(6) { width: 52px; }
.tab:nth-child(7) { width: 36px; margin-right: 3px; }
.tab:nth-child(8) { width: 39px; margin-right: 3px; }
.tab:nth-child(9) { width: 38px; margin-right: 2px; }
.tab:nth-child(10) { width: 37px; margin-right: 2px; }
.tab:nth-child(11) { width: 37px; }
.content { height: 573px; box-sizing: border-box; border: 1px solid #aaa; border-width: 1px 0 0 1px; background: #f8fcff; padding: 0 14px 0 12px; font-size: 13px; line-height: 18px; }
.content h1 { margin: 0 0 3px; padding-top: 18px; height: 48px; box-sizing: border-box; border-bottom: 1px solid #aaa; font: 24px/30px "Liberation Sans", sans-serif; }
.options { width: 760px; height: 78px; box-sizing: border-box; background: #fff; display: grid; grid-template-columns: 223px 288px 240px; grid-auto-rows: 25px; padding: 2px 0 0 7px; }
.options label { display: flex; align-items: center; }
.check { width: 13px; height: 13px; box-sizing: border-box; border: 1px solid #8b8d91; background: linear-gradient(135deg, #bfc4cc, #fafafa 80%) content-box, #f4f4f4; padding: 1px; margin: -5px 3px 0 0; }
.pause { width: 110px; height: 20px; margin: 2px 0 0 -3px; font-size: 13px; }
.content p { margin: 0; }
.from { font-size: 12.300px; height: 18px; padding-top: 1px; }
.from + .sub { font-size: 10.500px; line-height: 14px; color: #777; padding-left: 12px; height: 29px; }
.para { height: 25px; }
.second { height: 24px; }
.rule { height: 1px; background: #aaa; }
.update { height: 25px; box-sizing: border-box; border: 3px solid orange; line-height: 19px; color: #808080; white-space: nowrap; overflow: hidden; display: flex; }
.rule + .update { margin-top: 3px; }
.blk { color: #000; }
.edit { position: relative; height: 18px; line-height: 20px; padding-bottom: 7px; padding-left: 1px; display: flex; white-space: pre; }
.rule + .edit { padding-top: 3px; }
.edit::before { content: ""; position: absolute; left: -13px; top: 7px; width: 5px; height: 5px; border-radius: 50%; background: #000; }
.rule + .edit::before { top: 10px; }
.edit.tight { padding-bottom: 6px; }
.edit.loose { padding-top: 1px; }
.muted { font-style: italic; color: #8a8a8a; }

.scroll { width: 16px; background: #ededed; border-left: 1px solid #e2e2e2; box-sizing: border-box; display: flex; flex-direction: column; align-items: center; position: relative; }
.arrow { width: 0; height: 0; border: 4px solid transparent; }
.up { border-top: 0; border-bottom-color: #444; margin: 7px 0; }
.down { border-bottom: 0; border-top-color: #444; margin: auto 0 6px; }
.thumb { width: 14px; height: 426px; box-sizing: border-box; border: 1px solid #8e8e8e; border-radius: 2px; background: linear-gradient(90deg, #f5f5f5 45%, #dadadc 50%, #c3c4c8); display: flex; flex-direction: column; align-items: center; justify-content: center; gap: 2px; }
.thumb i { width: 7px; height: 1px; background: #555; }
.status { flex: none; height: 21px; background: #f0eded; padding-left: 6px; line-height: 18px; box-sizing: border-box; border-bottom: 1px solid #fff; }

.taskbar { position: relative; flex: none; height: 30px; background: linear-gradient(#2b2f32 0, #8e9193 1px, #696c6e 3px, #4a4c4e 12px, #303234 14px, #141516 16px, #0b0c0d); display: flex; align-items: center; color: #fff; }
.start { margin: -4px 0 0 6px; }
.quick { display: grid; grid-template-columns: 23px 23px 33px 17px; margin-left: 11px; align-items: center; }
.more { font-size: 15px; margin-top: -12px; }
.task { width: 157px; height: 27px; box-sizing: border-box; margin-left: 1px; border: 1px solid #666a6d; border-radius: 3px; background: linear-gradient(#37393a, #1b1c1d 50%, #050505 50%, #111); display: flex; align-items: center; padding-left: 8px; }
.task .t { margin-left: 4px; }
.tray { display: grid; align-items: center; grid-template-columns: 36px 131px 30px 11px 17px 19px 29px 18px 18px 21px 63px; margin-left: auto; }
.hp { font: italic bold 14px "Liberation Sans", sans-serif; fill: #444; }
.aa { font: bold 13px "Liberation Serif", serif; fill: #fff; }
.yahoo { width: 127px; height: 19px; box-sizing: border-box; background: #fff; border-radius: 2px; padding-left: 24px; color: #777; font: 500 13px/19px "DejaVu Sans", sans-serif; }
</style>
